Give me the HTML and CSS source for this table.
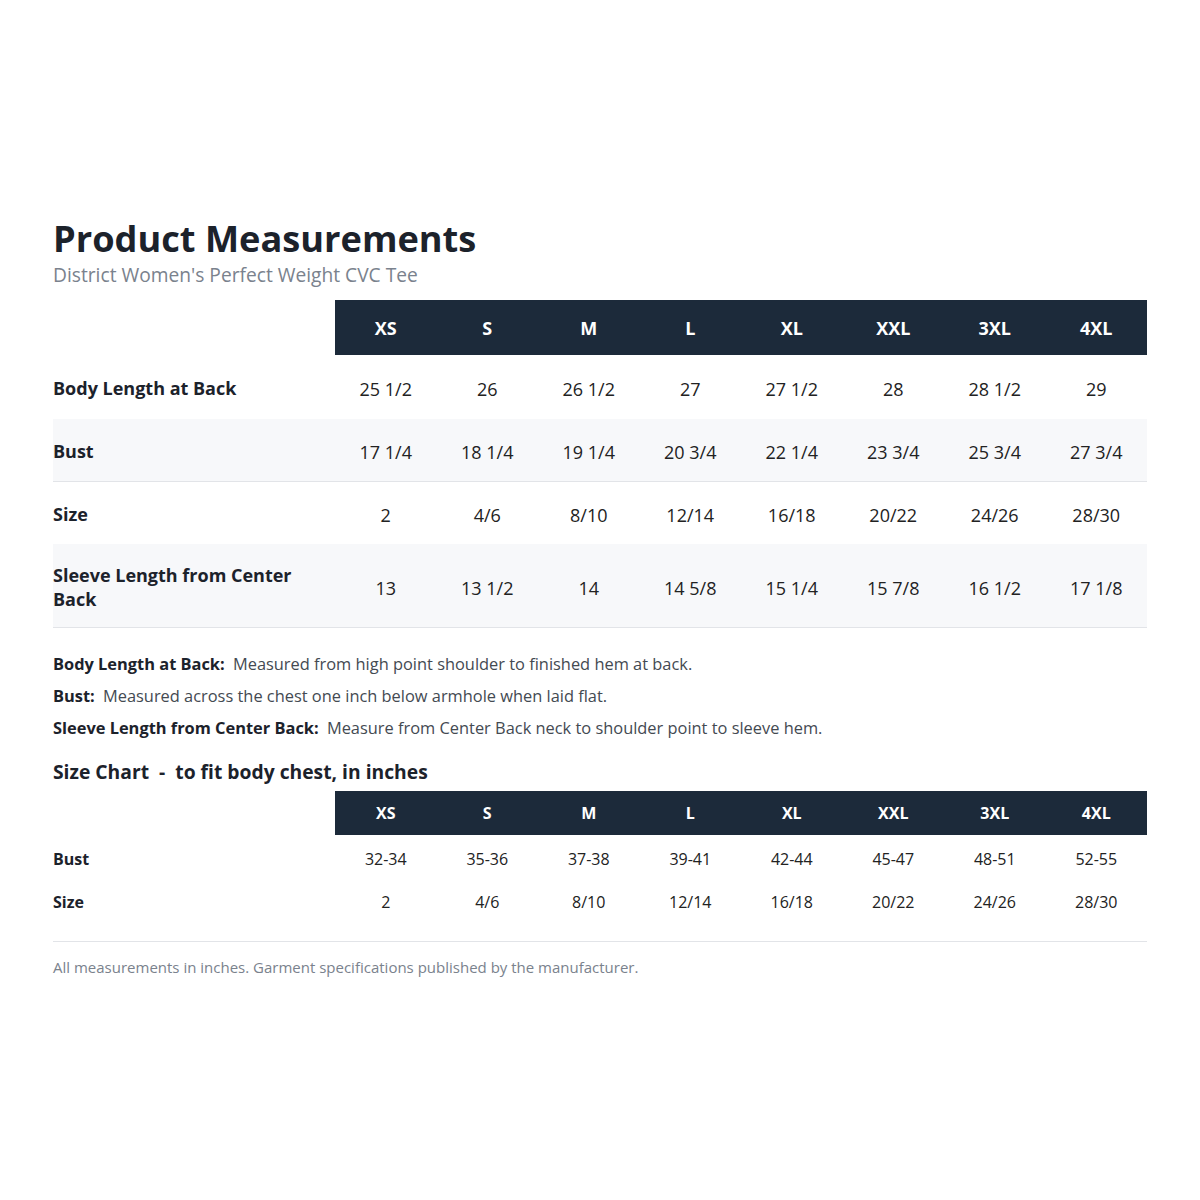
FILE: index.html
```html
<!DOCTYPE html>
<html lang="en">
<head>
    <meta charset="UTF-8">
    <title>Product Measurements</title>
    <link rel="stylesheet" href="styles.css">
</head>
<body>
    <div class="container">
        <h1>Product Measurements</h1>
        <div class="subtitle">District Women's Perfect Weight CVC Tee</div>

        <table class="measure">
            <thead>
                <tr>
                    <th class="blank"></th>
                    <th>XS</th><th>S</th><th>M</th><th>L</th><th>XL</th><th>XXL</th><th>3XL</th><th>4XL</th>
                </tr>
            </thead>
            <tbody>
                <tr>
                    <td class="label">Body Length at Back</td>
                    <td>25 1/2</td><td>26</td><td>26 1/2</td><td>27</td><td>27 1/2</td><td>28</td><td>28 1/2</td><td>29</td>
                </tr>
                <tr class="stripe">
                    <td class="label">Bust</td>
                    <td>17 1/4</td><td>18 1/4</td><td>19 1/4</td><td>20 3/4</td><td>22 1/4</td><td>23 3/4</td><td>25 3/4</td><td>27 3/4</td>
                </tr>
                <tr>
                    <td class="label">Size</td>
                    <td>2</td><td>4/6</td><td>8/10</td><td>12/14</td><td>16/18</td><td>20/22</td><td>24/26</td><td>28/30</td>
                </tr>
                <tr class="stripe tall">
                    <td class="label">Sleeve Length from Center Back</td>
                    <td>13</td><td>13 1/2</td><td>14</td><td>14 5/8</td><td>15 1/4</td><td>15 7/8</td><td>16 1/2</td><td>17 1/8</td>
                </tr>
            </tbody>
        </table>

        <div class="notes">
            <p><b>Body Length at Back:</b> Measured from high point shoulder to finished hem at back.</p>
            <p><b>Bust:</b> Measured across the chest one inch below armhole when laid flat.</p>
            <p><b>Sleeve Length from Center Back:</b> Measure from Center Back neck to shoulder point to sleeve hem.</p>
        </div>

        <h2>Size Chart &nbsp;- &nbsp;to fit body chest, in inches</h2>

        <table class="chart">
            <thead>
                <tr>
                    <th class="blank"></th>
                    <th>XS</th><th>S</th><th>M</th><th>L</th><th>XL</th><th>XXL</th><th>3XL</th><th>4XL</th>
                </tr>
            </thead>
            <tbody>
                <tr>
                    <td class="label">Bust</td>
                    <td>32-34</td><td>35-36</td><td>37-38</td><td>39-41</td><td>42-44</td><td>45-47</td><td>48-51</td><td>52-55</td>
                </tr>
                <tr>
                    <td class="label">Size</td>
                    <td>2</td><td>4/6</td><td>8/10</td><td>12/14</td><td>16/18</td><td>20/22</td><td>24/26</td><td>28/30</td>
                </tr>
            </tbody>
        </table>

        <div class="footer">All measurements in inches. Garment specifications published by the manufacturer.</div>
    </div>
</body>
</html>
```

FILE: styles.css
```css
body {
    font-family: "Open Sans", "Noto Sans", sans-serif;
    background-color: #ffffff;
    color: #1f242b;
    margin: 0;
    padding: 0;
}
.container {
    width: 1094px;
    margin: 0 auto;
    padding-top: 213px;
}
h1 {
    font-size: 36.2px;
    font-weight: 700;
    line-height: 50px;
    margin: 0;
    color: #1c222b;
}
.subtitle {
    font-size: 19.2px;
    color: #7a828d;
    line-height: 26px;
    margin-top: -1px;
}
table {
    width: 100%;
    border-collapse: collapse;
    table-layout: fixed;
}
th.blank {
    width: 282px;
    background: none;
}
th {
    background: #1c2a3a;
    color: #ffffff;
    font-weight: 700;
    text-align: center;
}
td {
    text-align: center;
    vertical-align: middle;
    color: #222;
}
td.label {
    text-align: left;
    font-weight: 700;
    color: #1c222b;
    padding-right: 40px;
}
.measure {
    margin-top: 12px;
}
.measure th {
    height: 55px;
    font-size: 18px;
    padding: 0;
}
.measure td {
    height: 58px;
    font-size: 18px;
    padding: 4px 0 0 0;
}
.measure tbody tr:first-child td {
    height: 60px;
}
.measure tr.stripe td {
    background: #f7f8fa;
    border-bottom: 1px solid #e2e4e8;
}
.measure tr.tall td {
    height: 79px;
}
.measure td.label {
    padding: 2px 40px 0 0;
}
.notes {
    margin-top: 25px;
    font-size: 16.4px;
    color: #444a52;
}
.notes p {
    margin: 0 0 10px 0;
    line-height: 22px;
}
.notes b {
    color: #1c222b;
    margin-right: 4px;
}
h2 {
    font-size: 19.3px;
    font-weight: 700;
    margin: 20px 0 6px 0;
    line-height: 26px;
    color: #1c222b;
}
.chart th {
    height: 44px;
    font-size: 16px;
    padding: 0;
}
.chart td {
    height: 43px;
    font-size: 16px;
    padding: 0;
}
.chart tbody tr:first-child td {
    padding-top: 2px;
}
.chart {
    border-bottom: 1px solid #e2e4e8;
}
.chart tbody tr:last-child td {
    padding-bottom: 18px;
}
.footer {
    margin-top: 15px;
    font-size: 15px;
    color: #7a828d;
}
```
